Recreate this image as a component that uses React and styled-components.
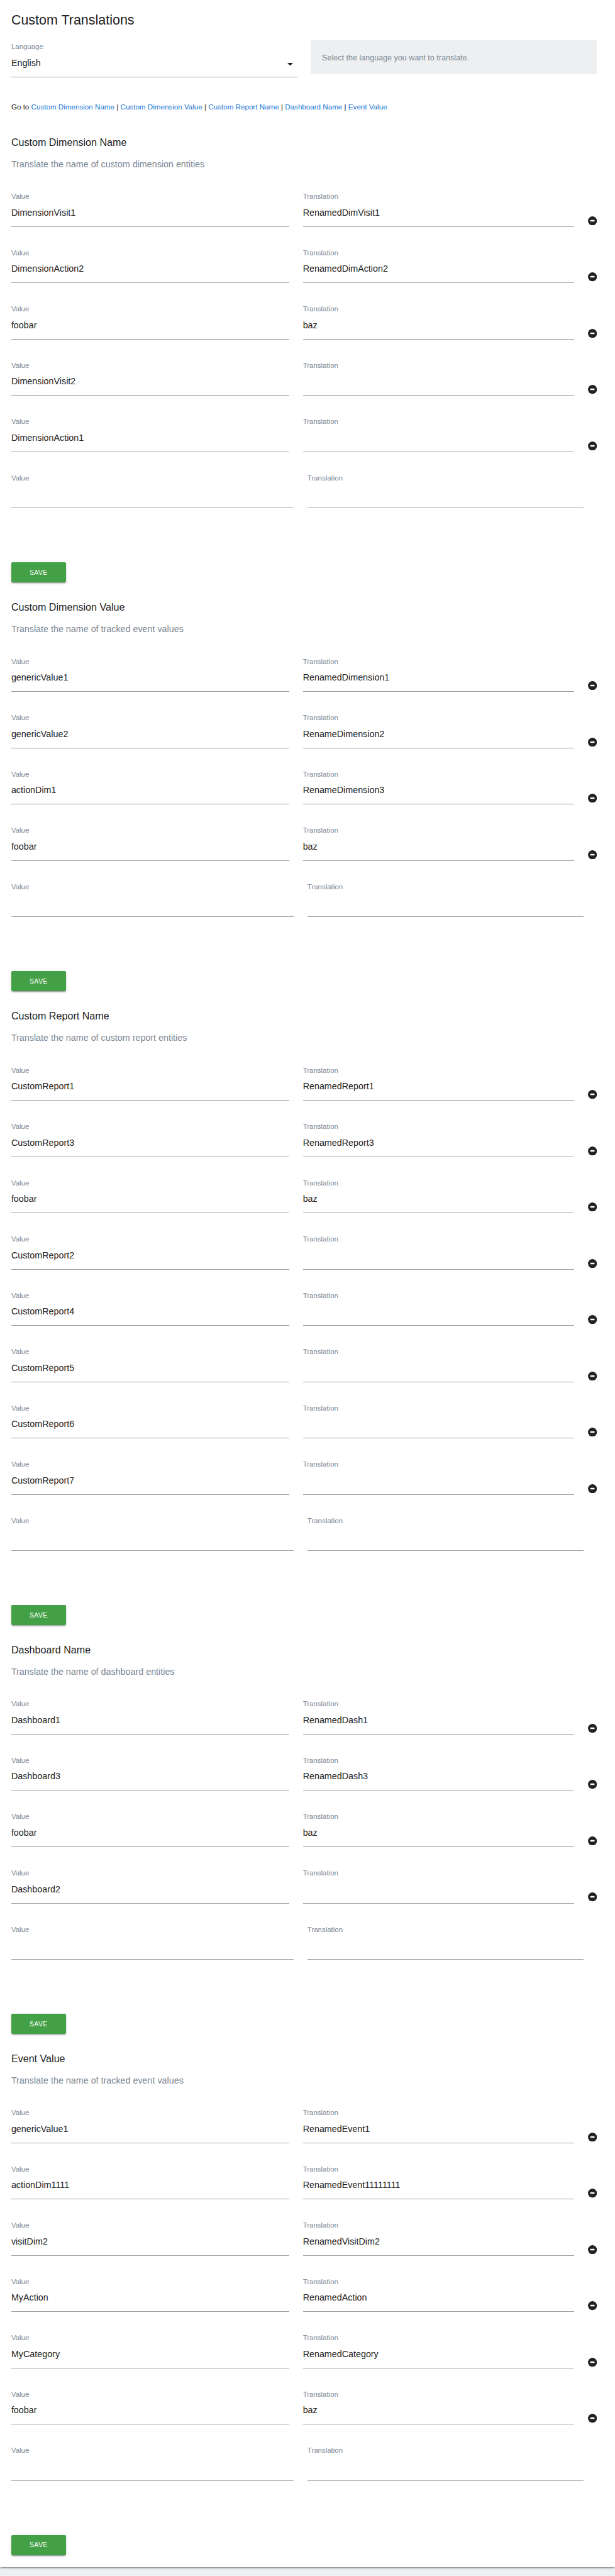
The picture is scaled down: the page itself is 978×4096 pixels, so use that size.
import React from "react";
import styled, { createGlobalStyle } from "styled-components";

const SCALE = 0.8953;
const u = (n) => `${+(n * SCALE).toFixed(3)}px`;

const GlobalStyle = createGlobalStyle`
  *, *::before, *::after { box-sizing: border-box; }
  html { background: #edeff1; }
  body {
    margin: 0;
    background: #edeff1;
    color: #212121;
    font-family: "Liberation Sans", Arial, Helvetica, sans-serif;
  }
`;

const Page = styled.main`
  height: 4096px;
  padding-bottom: ${u(16)};
  overflow: hidden;
`;

const Card = styled.div`
  height: 100%;
  padding: ${u(21.3)} ${u(32)} 0 ${u(20)};
  background: #fff;
  border-radius: 2px;
  box-shadow: 0 2px 2px 0 rgba(0, 0, 0, 0.14), 0 1px 5px 0 rgba(0, 0, 0, 0.12),
    0 3px 1px -2px rgba(0, 0, 0, 0.2);
`;

const Title = styled.h1`
  margin: 0;
  font-size: ${u(24)};
  line-height: ${u(30)};
  font-weight: 400;
`;

const LanguageRow = styled.div`
  display: flex;
  align-items: flex-start;
  gap: ${u(24)};
  height: ${u(65)};
  margin-top: ${u(20.7)};
`;

const LanguageCell = styled.div`
  flex: 0 0 ${u(508)};
  padding-top: ${u(3)};
`;

const Hint = styled.aside`
  display: flex;
  align-items: center;
  flex: 0 0 ${u(508)};
  height: ${u(60)};
  padding: ${u(1.6)} ${u(20)} 0;
  border-radius: 2px;
  background: #eeeff1;
  color: #7b8791;
  font-size: ${u(14)};
  letter-spacing: 0.02px;
`;

const Field = styled.div`
  width: ${(p) => (p.$width ? u(p.$width) : "100%")};
  height: ${u(62)};
  border-bottom: 1px solid #9e9e9e;
`;

const Label = styled.label`
  display: block;
  height: ${u(16)};
  color: #7b8794;
  font-size: ${u(12.8)};
  line-height: ${u(16)};
`;

const Value = styled.div`
  display: flex;
  align-items: center;
  justify-content: space-between;
  height: ${u(20)};
  margin-top: ${u(11.4)};
  padding-right: ${u(7)};
  font-size: ${u(16)};
  line-height: ${u(20)};
`;

const Caret = styled.svg`
  display: block;
  width: ${u(10)};
  height: ${u(5)};
  margin-top: ${u(3)};
`;

const JumpLinks = styled.nav`
  margin-top: ${u(43.8)};
  height: ${u(18)};
  font-size: ${u(13)};
  line-height: ${u(18)};
  white-space: pre;
`;

const JumpLink = styled.a`
  color: #1976d2;
  text-decoration: none;
`;

const Section = styled.section`
  padding-top: ${(p) => (p.$first ? u(42.5) : u(32.3))};
`;

const SectionTitle = styled.h2`
  margin: 0;
  font-size: ${u(18)};
  line-height: ${u(24)};
  font-weight: 400;
`;

const Description = styled.p`
  margin: ${u(15.7)} 0 ${u(38)};
  color: #7b8794;
  font-size: ${u(16)};
  line-height: ${u(22)};
`;

const Row = styled.div`
  display: flex;
  gap: ${u(24)};
  height: ${u(100)};
`;

const RemoveButton = styled.button`
  flex: none;
  width: ${u(16)};
  height: ${u(16)};
  margin-top: ${u(43)};
  padding: 0;
  border: 0;
  background: none;
`;

const RemoveIcon = styled.svg`
  display: block;
  width: 100%;
  height: 100%;
`;

const SaveButton = styled.button`
  display: flex;
  align-items: center;
  justify-content: center;
  width: ${u(97)};
  height: ${u(36)};
  margin-top: ${u(58)};
  padding: 0;
  border: 0;
  border-radius: 2px;
  background: #43a047;
  color: #fff;
  font-family: inherit;
  font-size: ${u(11.6)};
  letter-spacing: ${u(0.5)};
  box-shadow: 0 2px 2px 0 rgba(0, 0, 0, 0.14), 0 1px 5px 0 rgba(0, 0, 0, 0.12),
    0 3px 1px -2px rgba(0, 0, 0, 0.2);
`;

const SECTIONS = [
  {
    title: "Custom Dimension Name",
    description: "Translate the name of custom dimension entities",
    rows: [
      ["DimensionVisit1", "RenamedDimVisit1"],
      ["DimensionAction2", "RenamedDimAction2"],
      ["foobar", "baz"],
      ["DimensionVisit2", ""],
      ["DimensionAction1", ""],
    ],
  },
  {
    title: "Custom Dimension Value",
    description: "Translate the name of tracked event values",
    rows: [
      ["genericValue1", "RenamedDimension1"],
      ["genericValue2", "RenameDimension2"],
      ["actionDim1", "RenameDimension3"],
      ["foobar", "baz"],
    ],
  },
  {
    title: "Custom Report Name",
    description: "Translate the name of custom report entities",
    rows: [
      ["CustomReport1", "RenamedReport1"],
      ["CustomReport3", "RenamedReport3"],
      ["foobar", "baz"],
      ["CustomReport2", ""],
      ["CustomReport4", ""],
      ["CustomReport5", ""],
      ["CustomReport6", ""],
      ["CustomReport7", ""],
    ],
  },
  {
    title: "Dashboard Name",
    description: "Translate the name of dashboard entities",
    rows: [
      ["Dashboard1", "RenamedDash1"],
      ["Dashboard3", "RenamedDash3"],
      ["foobar", "baz"],
      ["Dashboard2", ""],
    ],
  },
  {
    title: "Event Value",
    description: "Translate the name of tracked event values",
    rows: [
      ["genericValue1", "RenamedEvent1"],
      ["actionDim1111", "RenamedEvent11111111"],
      ["visitDim2", "RenamedVisitDim2"],
      ["MyAction", "RenamedAction"],
      ["MyCategory", "RenamedCategory"],
      ["foobar", "baz"],
    ],
  },
];

function TextField({ label, value, width }) {
  return (
    <Field $width={width}>
      <Label>{label}</Label>
      <Value>{value}</Value>
    </Field>
  );
}

function TranslationRow({ value, translation }) {
  return (
    <Row>
      <TextField label="Value" value={value} width={494} />
      <TextField label="Translation" value={translation} width={482} />
      <RemoveButton type="button" aria-label="Remove">
        <RemoveIcon viewBox="0 0 16 16">
          <circle cx="8" cy="8" r="7.9" fill="#212121" />
          <rect x="4.1" y="6.5" width="7.6" height="2.8" rx="0.7" fill="#fff" />
        </RemoveIcon>
      </RemoveButton>
    </Row>
  );
}

function TranslationSection({ title, description, rows, first }) {
  return (
    <Section $first={first}>
      <SectionTitle>{title}</SectionTitle>
      <Description>{description}</Description>
      {rows.map(([value, translation], i) => (
        <TranslationRow key={i} value={value} translation={translation} />
      ))}
      <Row>
        <TextField label="Value" width={502} />
        <TextField label="Translation" width={490} />
      </Row>
      <SaveButton type="button">SAVE</SaveButton>
    </Section>
  );
}

export default function App() {
  return (
    <>
      <GlobalStyle />
      <Page>
        <Card>
          <Title>Custom Translations</Title>
          <LanguageRow>
            <LanguageCell>
              <Field>
                <Label>Language</Label>
                <Value>
                  English
                  <Caret viewBox="0 0 10 5">
                    <path d="M0 0h10L5 5z" fill="#212121" />
                  </Caret>
                </Value>
              </Field>
            </LanguageCell>
            <Hint>Select the language you want to translate.</Hint>
          </LanguageRow>
          <JumpLinks>
            {"Go to "}
            {SECTIONS.map(({ title }, i) => (
              <React.Fragment key={title}>
                {i > 0 && " | "}
                <JumpLink>{title}</JumpLink>
              </React.Fragment>
            ))}
          </JumpLinks>
          {SECTIONS.map((section, i) => (
            <TranslationSection key={section.title} first={i === 0} {...section} />
          ))}
        </Card>
      </Page>
    </>
  );
}
